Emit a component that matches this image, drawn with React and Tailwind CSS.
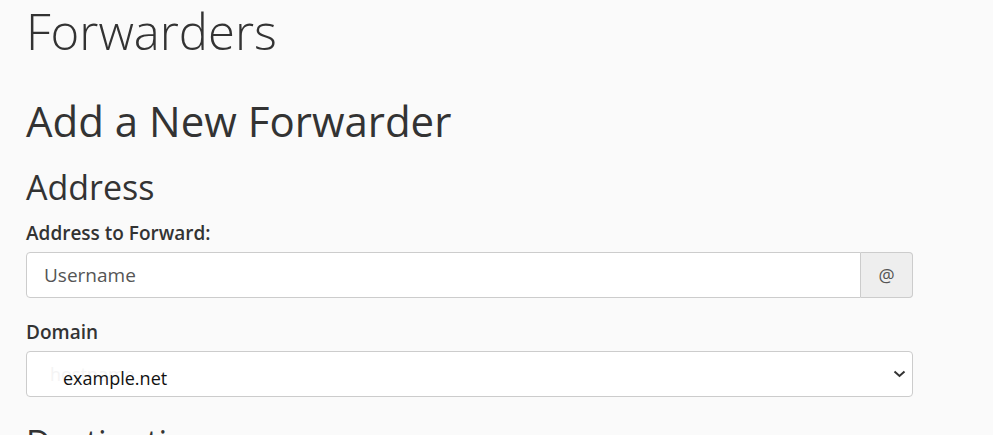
export default function App() {
  return (
    <div className="w-full bg-[#fafafa] text-[#333] overflow-hidden h-[435px]" style={{ fontFamily: '"Open Sans", sans-serif' }}>
      <div className="pl-[26px] w-[913px] pt-[1px]">
        <h1 className="text-[49px] font-light leading-[60px] text-[#333]">Forwarders</h1>
        <h2 className="text-[42px] font-normal leading-[50px] mt-[35px]">Add a New Forwarder</h2>
        <h3 className="text-[34px] font-normal leading-[40px] mt-[21px]">Address</h3>
        <label className="block text-[19px] font-semibold mt-[13px] leading-[26px]">Address to Forward:</label>
        <div className="flex mt-[6px] h-[46px]">
          <div className="flex-1 bg-white border border-[#ccc] rounded-l-[4px] flex items-center pl-[17px] text-[19px] text-[#555]">
            Username
          </div>
          <div className="w-[52px] bg-[#eee] border border-l-0 border-[#ccc] rounded-r-[4px] flex items-center justify-center text-[18px] text-[#555]">
            @
          </div>
        </div>
        <label className="block text-[19px] font-semibold mt-[21px] leading-[26px]">Domain</label>
        <div className="relative mt-[6px] h-[46px] bg-white border border-[#ccc] rounded-[4px] flex items-center">
          <span className="absolute left-[23px] top-[9px] text-[18px] text-[#f4f4f4]">hostname</span>
          <span className="relative pl-[36px] text-[18px] text-[#111] pt-[8px]">example.net</span>
          <svg className="absolute right-[6px] top-[17px]" width="13" height="10" viewBox="0 0 13 10">
            <path d="M1.5 2.5 L6.5 7 L11.5 2.5" fill="none" stroke="#333" strokeWidth="2" />
          </svg>
        </div>
        <h3 className="text-[34px] font-normal leading-[40px] mt-[25px]">Destination</h3>
      </div>
    </div>
  );
}
